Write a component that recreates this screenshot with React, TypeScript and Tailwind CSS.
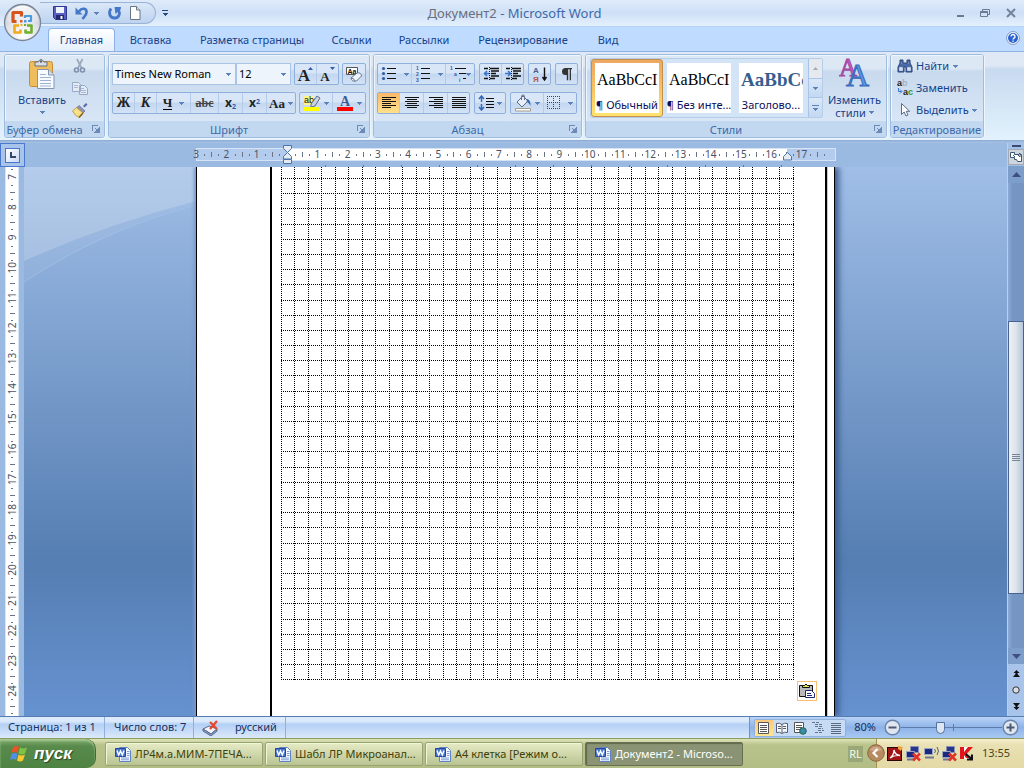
import type { ReactNode } from "react";
import { clsx } from "clsx";

const range = (from: number, to: number) =>
  Array.from({ length: to - from + 1 }, (_, i) => from + i);

function Arrow({ className }: { className?: string }) {
  return (
    <svg viewBox="0 0 5 3" className={clsx("h-[3px] w-[5px] shrink-0", className)} shapeRendering="crispEdges">
      <path d="M0 0h5v1h-1v1h-1v1h-1v-1h-1v-1h-1z" fill="#5a83bd" />
    </svg>
  );
}

/* ---------- Title bar ---------- */

function OfficeOrb() {
  return (
    <svg viewBox="0 0 40 40" className="size-10">
      <defs>
        <radialGradient id="orb" cx="50%" cy="85%" r="90%">
          <stop offset="0" stopColor="#ffffff" />
          <stop offset="0.5" stopColor="#dfe3ea" />
          <stop offset="1" stopColor="#a9b2c0" />
        </radialGradient>
        <linearGradient id="orbTop" x1="0" y1="0" x2="0" y2="1">
          <stop offset="0" stopColor="#fff" stopOpacity=".95" />
          <stop offset="1" stopColor="#fff" stopOpacity=".2" />
        </linearGradient>
      </defs>
      <circle cx="20.500" cy="20.500" r="18" fill="url(#orb)" stroke="#7c8596" strokeWidth="1.300" />
      <path d="M4.500 19.500a16 16 0 0 1 32 0q-16 4-32 0z" fill="url(#orbTop)" />
      <g fill="none" strokeLinejoin="round">
        <path d="M14.500 19.500h-3.500v-9h8.500v4" stroke="#d8521c" strokeWidth="3.200" />
        <path d="M26 19h3v-5h-6v2" stroke="#4a9be0" strokeWidth="2.200" />
        <path d="M17 23.500h-4.500v7h6v-3" stroke="#f2a91c" strokeWidth="2.600" />
        <path d="M25 23.500h4.500v7h-6v-3" stroke="#6fae2c" strokeWidth="2.600" />
      </g>
      <path d="M18 18h2.500v2.500h-2.500z" fill="#e2592a" />
      <path d="M22 18h2.500v2.500h-2.500z" fill="#4a9be0" />
      <path d="M18.500 22h2v2h-2z" fill="#f2b21c" />
      <path d="M22 22h2v2h-2z" fill="#6fae2c" />
    </svg>
  );
}

function SaveIcon() {
  return (
    <svg viewBox="0 0 16 16" className="size-4">
      <path d="M1.500 1.500h13v13h-11l-2-2z" fill="#5a5fc4" stroke="#2f3593" />
      <path d="M4 2h8v6h-8z" fill="#eef3fc" />
      <path d="M4 10h8v4.500h-8z" fill="#23286f" />
      <path d="M8.500 11h2v3h-2z" fill="#fff" />
    </svg>
  );
}

function UndoIcon() {
  return (
    <svg viewBox="0 0 16 16" className="size-4">
      <path d="M5 6.500C8 2 13 3.500 12.500 7.500c-.3 2.800-2 4-4 6.500" fill="none" stroke="#4577c9" strokeWidth="2.600" />
      <path d="M1.500 2.500v7h7z" fill="#4577c9" />
    </svg>
  );
}

function RedoIcon() {
  return (
    <svg viewBox="0 0 16 16" className="size-4">
      <path d="M4 3.500C1 8 3 13 7.500 13S13.500 8.500 11.500 5" fill="none" stroke="#4577c9" strokeWidth="2.800" />
      <path d="M7.500 2h6.500l-.500 2.500-5 4.500z" fill="#4577c9" />
    </svg>
  );
}

function PageIcon() {
  return (
    <svg viewBox="0 0 16 16" className="size-4">
      <path d="M3.500 1.500h6l3.500 3.500v9.500h-9.500z" fill="#fff" stroke="#6c7687" />
      <path d="M9.500 1.500v3.500h3.500" fill="#dbe2ec" stroke="#6c7687" />
    </svg>
  );
}

function TitleBar() {
  return (
    <header className="relative flex h-[27px] items-center border-b border-[#b7d3f5] bg-linear-to-b from-[#dfebfa] via-[#cfe0f6] to-[#e4f0fe]">
      <button aria-label="Office" className="absolute top-[2px] left-[2px] z-10">
        <OfficeOrb />
      </button>
      <div className="ml-10 flex h-[22px] w-[116px] items-center rounded-r-full border border-[#9ab4d8] border-l-0 bg-linear-to-b from-[#dbe8f8] to-[#bdd3ef] pl-3">
        <button aria-label="Сохранить"><SaveIcon /></button>
        <button aria-label="Отменить" className="ml-[6px] flex items-center gap-1"><UndoIcon /><Arrow /></button>
        <button aria-label="Повторить" className="ml-2"><RedoIcon /></button>
        <button aria-label="Создать" className="ml-1"><PageIcon /></button>
      </div>
      <button aria-label="Настройка панели" className="ml-[6px]">
        <svg viewBox="0 0 6 6" className="size-[6px]" shapeRendering="crispEdges">
          <path d="M0 0h6v1h-6zM0 3h6l-3 3z" fill="#27477f" />
        </svg>
      </button>
      <h1 className="flex-1 pt-[2px] pr-[93px] text-center text-[13px] text-[#3e6aaa]">
        <span className="text-[#696f7b]">Документ2</span> - Microsoft Word
      </h1>
      <div className="flex items-center gap-4 pr-2">
        <button aria-label="Свернуть">
          <svg viewBox="0 0 10 10" className="size-[10px]"><path d="M3 7h7v2h-7z" fill="#6a7a92" /></svg>
        </button>
        <button aria-label="Свернуть в окно">
          <svg viewBox="0 0 10 10" className="size-[10px]"><path d="M2.500 3.500v-2h7v5h-2M.5 3.500h7v5h-7zM.5 4.500h7" fill="none" stroke="#6a7a92" /></svg>
        </button>
        <button aria-label="Закрыть">
          <svg viewBox="0 0 10 10" className="size-[10px]"><path d="M1 1l8 8M9 1l-8 8" stroke="#74839a" strokeWidth="2" /></svg>
        </button>
      </div>
    </header>
  );
}

const tabs = [
  { name: "Вставка", width: "w-[71px]" },
  { name: "Разметка страницы", width: "w-[132px]" },
  { name: "Ссылки", width: "w-[67px]" },
  { name: "Рассылки", width: "w-[78px]" },
  { name: "Рецензирование", width: "w-[120px]" },
  { name: "Вид", width: "w-[50px]" },
];

function TabStrip() {
  return (
    <nav className="flex h-6 items-end bg-[#bfdbff] pl-12 text-[11px] text-[#15428b]">
      <button className="-mb-px h-6 w-[67px] rounded-t border border-b-0 border-[#8db2e3] bg-linear-to-b from-white to-[#e4eefb]">Главная</button>
      {tabs.map((tab) => (
        <button key={tab.name} className={clsx("h-6 pt-[2px] whitespace-nowrap", tab.width)}>{tab.name}</button>
      ))}
      <button aria-label="Справка" className="mr-1 mb-[6px] ml-auto">
        <svg viewBox="0 0 14 14" className="size-[14px]">
          <circle cx="7" cy="7" r="6.400" fill="#fff" stroke="#7c95bd" />
          <circle cx="7" cy="7" r="5" fill="#2a62d2" />
          <path d="M5 5.500a2 2 0 1 1 3 1.700c-.8.500-1 .7-1 1.300M7 9.500v1.300" fill="none" stroke="#fff" strokeWidth="1.400" />
        </svg>
      </button>
    </nav>
  );
}

/* ---------- Ribbon building blocks ---------- */

function Group({ title, width, launcher = true, children }: { title: string; width: string; launcher?: boolean; children: ReactNode }) {
  return (
    <section className={clsx("flex shrink-0 flex-col overflow-hidden rounded-[3px] border border-[#9fbbdd] shadow-[1px_1px_0_#eef5fd]", width)}>
      <div className="min-h-0 flex-1 bg-linear-to-b from-[#dde8f5] from-20% via-[#c9daee] via-25% to-[#d8e6f6] inset-shadow-[1px_1px_0_#eef5fd]">{children}</div>
      <footer className="relative flex h-[16px] items-center justify-center bg-[#c1d8f0] pt-px text-[11px] leading-[15px] whitespace-nowrap text-[#3e6aaa]">
        <span className={clsx(launcher && "pr-5")}>{title}</span>
        {launcher && (
          <button aria-label={`${title}: параметры`} className="absolute top-1 right-1">
            <svg viewBox="0 0 8 8" className="size-2" shapeRendering="crispEdges">
              <path d="M0 0h6v1h-5v5h-1z" fill="#6b8ab5" />
              <path d="M3 3l3 3M7 3v4h-4z" fill="#6b8ab5" stroke="#6b8ab5" />
            </svg>
          </button>
        )}
      </footer>
    </section>
  );
}

function ButtonBar({ children }: { children: ReactNode }) {
  return (
    <div className="flex h-[22px] shrink-0 divide-x divide-[#b3cae8] overflow-hidden rounded-[2px] border border-[#8fb0dc] bg-linear-to-b from-[#d8e6f7] from-45% via-[#c3d7f0] via-50% to-[#d3e2f6]">
      {children}
    </div>
  );
}

function Tool({ label, width, active, arrow, children }: { label: string; width: string; active?: boolean; arrow?: boolean; children: ReactNode }) {
  return (
    <button
      aria-label={label}
      className={clsx("flex h-full items-center justify-center gap-[3px] leading-none text-[#222]", width, active && "bg-linear-to-b from-[#fbb868] to-[#ffe08a]")}
    >
      {children}
      {arrow && <Arrow />}
    </button>
  );
}

function Lines({ rows }: { rows: [number, number][] }) {
  return (
    <svg viewBox="0 0 16 14" className="h-[14px] w-4" shapeRendering="crispEdges">
      {rows.map(([x, w], i) => <path key={i} d={`M${x} ${i * 2 + 1}h${w}v1h-${w}z`} fill="#111" />)}
    </svg>
  );
}

function PasteIcon() {
  return (
    <svg viewBox="0 0 30 32" className="h-8 w-[30px]">
      <rect x="2.500" y="3.500" width="23" height="25" rx="2" fill="#f0bd5d" stroke="#c68d36" />
      <path d="M8 4h3q3-5 6 0h3v4h-12z" fill="#d9dde4" stroke="#6b7280" />
      <circle cx="14" cy="3.500" r="1.200" fill="#5b6270" />
      <path d="M10.500 11.500h11l5.500 5.500v13.500h-16.500z" fill="#f7faff" stroke="#8496b4" />
      <path d="M21.500 11.500v5.500h5.500" fill="#cfdcee" stroke="#8496b4" />
      <path d="M13 16.500h6M13 19.500h11M13 22.500h11M13 25.500h11M13 28h11" stroke="#9fb2d2" />
    </svg>
  );
}

function ClipboardGroup() {
  return (
    <Group title="Буфер обмена" width="w-[101px]">
      <div className="flex pl-[11px]">
        <button className="flex w-[52px] flex-col items-center pt-[3px] text-[11px] leading-[14px] text-[#15428b]">
          <PasteIcon />
          <span className="mt-[3px]">Вставить</span>
          <Arrow className="mt-1" />
        </button>
        <div className="ml-1 flex flex-col gap-[6px] pt-[3px]">
          <button aria-label="Вырезать">
            <svg viewBox="0 0 16 16" className="size-4">
              <path d="M5 1l4.500 9M10.500 1l-4.500 9" stroke="#9aa9bf" strokeWidth="1.700" />
              <circle cx="4.500" cy="12" r="2" fill="none" stroke="#7f90ab" strokeWidth="1.600" />
              <circle cx="10.500" cy="12" r="2" fill="none" stroke="#7f90ab" strokeWidth="1.600" />
            </svg>
          </button>
          <button aria-label="Копировать">
            <svg viewBox="0 0 16 16" className="size-4">
              <path d="M.5 2.500h6l2 2v7h-8zM7.500 5.500h5l3 3v6h-8z" fill="#e3ebf6" stroke="#97a9c6" />
              <path d="M2 5.500h4M2 7.500h4M9 8.500h3M9 10.500h5M9 12.500h5" stroke="#a9b9d2" />
            </svg>
          </button>
          <button aria-label="Формат по образцу">
            <svg viewBox="0 0 16 16" className="size-4">
              <path d="M11 4l3-3 1.500 1.500-3 3z" fill="#5a6aa0" />
              <path d="M7 3.500l6 5.500-2 2-6.500-5z" fill="#8f95b0" stroke="#535d85" strokeWidth=".6" />
              <path d="M4.500 5.500l6.500 5.500-3.500 4.500q-4-1-7-6.500z" fill="#f8e08a" stroke="#b98f2c" strokeWidth=".8" />
              <path d="M7 15.500l4-4.500" stroke="#8a6417" strokeWidth="1.500" />
            </svg>
          </button>
        </div>
      </div>
    </Group>
  );
}

function Combo({ label, value, width }: { label: string; value: string; width: string }) {
  return (
    <div className={clsx("relative h-[22px] border border-[#a9c4e6] bg-[#edf4fc]", width)}>
      <select aria-label={label} className="block h-5 w-full appearance-none pb-px pl-[2px] text-[11px] leading-[18px] text-black">
        <option>{value}</option>
      </select>
      <Arrow className="pointer-events-none absolute top-[9px] right-[4px]" />
    </div>
  );
}

function FontGroup() {
  const serif = "font-['Liberation_Serif',serif]";
  return (
    <Group title="Шрифт" width="w-[262px]">
      <div className="flex flex-col gap-[7px] px-[3px] pt-[8px]">
        <div className="flex">
          <Combo label="Шрифт" value="Times New Roman" width="w-[124px]" />
          <Combo label="Размер" value="12" width="w-[55px]" />
          <div className="ml-[3px] flex gap-[3px]">
            <ButtonBar>
              <Tool label="Увеличить размер" width="w-[22px]">
                <span className={clsx(serif, "pt-[2px] text-[17px] font-bold")}>A</span>
                <svg viewBox="0 0 5 3" className="-ml-[5px] mb-3 h-[3px] w-[5px]"><path d="M0 3h5l-2.500-3z" fill="#2f5da8" /></svg>
              </Tool>
              <Tool label="Уменьшить размер" width="w-[21px]">
                <span className={clsx(serif, "pt-1 text-[13px] font-bold")}>A</span>
                <svg viewBox="0 0 5 3" className="-ml-[3px] mb-3 h-[3px] w-[5px]"><path d="M0 0h5l-2.500 3z" fill="#2f5da8" /></svg>
              </Tool>
            </ButtonBar>
            <ButtonBar>
              <Tool label="Очистить формат" width="w-[22px]">
                <svg viewBox="0 0 18 18" className="size-[18px]">
                  <path d="M1.500 2.500h11v7h-11z" fill="#fff" stroke="#555" />
                  <text x="2.500" y="8.500" fontSize="7" fontWeight="bold" fontFamily="Liberation Sans" fill="#111">Aa</text>
                  <path d="M6 13l6-5q4-1 4.500 3l-5 5q-5 1-5.500-3z" fill="#f0f3f8" stroke="#68768e" />
                  <path d="M6 13q3 0 4 3" fill="none" stroke="#68768e" />
                </svg>
              </Tool>
            </ButtonBar>
          </div>
        </div>
        <div className="flex gap-[3px]">
          <ButtonBar>
            <Tool label="Полужирный" width="w-[22px]"><b className={clsx(serif, "text-[14px]")}>Ж</b></Tool>
            <Tool label="Курсив" width="w-[22px]"><b className={clsx(serif, "text-[14px] italic")}>К</b></Tool>
            <Tool label="Подчеркнутый" width="w-[34px]" arrow>
              <b className={clsx(serif, "mr-1 border-b border-black text-[13px] leading-[12px]")}>Ч</b>
            </Tool>
            <Tool label="Зачеркнутый" width="w-[28px]"><b className={clsx(serif, "text-[12px] text-[#444] line-through")}>abc</b></Tool>
            <Tool label="Подстрочный" width="w-[24px]"><b className="text-[12px]">x<sub className="text-[7px] text-[#2f5da8]">2</sub></b></Tool>
            <Tool label="Надстрочный" width="w-[24px]"><b className="text-[12px]">x<sup className="text-[7px] text-[#2f5da8]">2</sup></b></Tool>
            <Tool label="Регистр" width="w-[28px]" arrow><b className={clsx(serif, "text-[13px]")}>Aa</b></Tool>
          </ButtonBar>
          <ButtonBar>
            <Tool label="Цвет выделения" width="w-[33px]" arrow>
              <svg viewBox="0 0 18 18" className="size-[18px]">
                <path d="M1 2h10v9h-10z" fill="#fbf58c" />
                <text x="1" y="9" fontSize="9" fontFamily="Liberation Sans" fill="#111">ab</text>
                <path d="M8 10l6-8 3 2-5 8-4 1z" fill="#c9d2e0" stroke="#5c6b86" />
                <path d="M1 13h16v4h-16z" fill="#ff0" />
              </svg>
            </Tool>
            <Tool label="Цвет текста" width="w-[32px]" arrow>
              <svg viewBox="0 0 18 18" className="size-[18px]">
                <text x="4" y="12" fontSize="14" fontWeight="bold" fontFamily="Liberation Serif" fill="#3b5c9a">A</text>
                <path d="M1 13h16v4h-16z" fill="#f00" />
              </svg>
            </Tool>
          </ButtonBar>
        </div>
      </div>
    </Group>
  );
}

function ParagraphGroup() {
  return (
    <Group title="Абзац" width="w-[209px]">
      <div className="flex flex-col gap-[7px] px-[3px] pt-[8px]">
        <div className="flex gap-1">
          <ButtonBar>
            <Tool label="Маркеры" width="w-[34px]" arrow>
              <svg viewBox="0 0 16 16" className="mr-1 size-4">
                <path d="M6 2.500h9M6 7.500h9M6 12.500h9" stroke="#111" />
                <circle cx="2.500" cy="2.500" r="1.600" fill="#2f5da8" /><circle cx="2.500" cy="7.500" r="1.600" fill="#2f5da8" /><circle cx="2.500" cy="12.500" r="1.600" fill="#2f5da8" />
              </svg>
            </Tool>
            <Tool label="Нумерация" width="w-[34px]" arrow>
              <svg viewBox="0 0 16 18" className="mr-1 h-[18px] w-4">
                <path d="M6 3.500h9M6 8.500h9M6 13.500h9" stroke="#111" />
                <g fontSize="5" fontWeight="bold" fontFamily="Liberation Sans" fill="#2f5da8"><text x="1" y="5">1</text><text x="1" y="11">2</text><text x="1" y="17">3</text></g>
              </svg>
            </Tool>
            <Tool label="Многоуровневый список" width="w-[28px]" arrow>
              <svg viewBox="0 0 17 18" className="-mr-1 h-[18px] w-[17px]">
                <path d="M5 3.500h11M9 8.500h7M13 13.500h3" stroke="#111" />
                <g fontSize="5" fontWeight="bold" fontFamily="Liberation Sans" fill="#2f5da8"><text x="0" y="5">1</text><text x="4" y="11">a</text><text x="9" y="17">i</text></g>
              </svg>
            </Tool>
          </ButtonBar>
          <ButtonBar>
            {["M6 7.500h-5M4 5l-2.500 2.500 2.500 2.500", "M0 7.500h5M3 5l2.500 2.500-2.500 2.500"].map((path, i) => (
              <Tool key={path} label={i ? "Увеличить отступ" : "Уменьшить отступ"} width={i ? "w-[21px]" : "w-[22px]"}>
                <svg viewBox="0 0 16 16" className="size-4">
                  <path d="M1 2.500h4M7 2.500h9M8 5h8M8 7.500h5M8 10h8M1 12.500h4M7 12.500h5" stroke="#111" strokeWidth="1.300" />
                  <path d="M6.500 1v14" stroke="#111" strokeDasharray="1 1" />
                  <path d={path} fill="none" stroke="#3b74d0" strokeWidth="1.600" />
                </svg>
              </Tool>
            ))}
          </ButtonBar>
          <ButtonBar>
            <Tool label="Сортировка" width="w-[21px]">
              <svg viewBox="0 0 16 20" className="h-5 w-4">
                <g fontSize="8" fontWeight="bold" fontFamily="Liberation Sans"><text x="1" y="9" fill="#3f6396">А</text><text x="1" y="18" fill="#b25a55">Я</text></g>
                <path d="M12.500 3.500v12M10.500 13l2 3 2-3" fill="none" stroke="#111" strokeWidth="1.400" />
              </svg>
            </Tool>
          </ButtonBar>
          <ButtonBar>
            <Tool label="Знаки абзаца" width="w-[21px]">
              <svg viewBox="0 0 12 14" className="h-[14px] w-3"><path d="M1 4.500a3.500 3.500 0 0 1 3.500-3.500h6.500v1.200h-1v11h-1.300v-11h-1.500v11h-1.400v-5.200h-1.300a3.500 3.500 0 0 1-3.500-3.500z" fill="#333" /></svg>
            </Tool>
          </ButtonBar>
        </div>
        <div className="flex gap-1">
          <ButtonBar>
            <Tool label="По левому краю" width="w-[22px]" active><Lines rows={[[1, 14], [1, 9], [1, 14], [1, 9], [1, 14], [1, 9]]} /></Tool>
            <Tool label="По центру" width="w-[24px]"><Lines rows={[[1, 14], [3, 10], [1, 14], [3, 10], [1, 14], [3, 10]]} /></Tool>
            <Tool label="По правому краю" width="w-[24px]"><Lines rows={[[1, 14], [6, 9], [1, 14], [6, 9], [1, 14], [6, 9]]} /></Tool>
            <Tool label="По ширине" width="w-[21px]"><Lines rows={[[1, 14], [1, 14], [1, 14], [1, 14], [1, 14], [1, 14]]} /></Tool>
          </ButtonBar>
          <ButtonBar>
            <Tool label="Интервал" width="w-[30px]" arrow>
              <svg viewBox="0 0 16 16" className="size-4">
                <path d="M3.500 2v5M3.500 9v5M1 4l2.500-3 2.500 3M1 12l2.500 3 2.500-3" fill="none" stroke="#3568b8" strokeWidth="1.500" />
                <path d="M8 3.500h8M8 6.500h8M8 9.500h8M8 12.500h8" stroke="#111" />
              </svg>
            </Tool>
          </ButtonBar>
          <ButtonBar>
            <Tool label="Заливка" width="w-[33px]" arrow>
              <svg viewBox="0 0 18 18" className="size-[18px]">
                <path d="M3 8l6-6 5 5-6 6z" fill="#e9eff8" stroke="#5c6b86" />
                <path d="M7.500 6v-3.500a1.500 1.500 0 0 1 3 0V6" fill="none" stroke="#5c6b86" />
                <path d="M13 5q4 1 3.500 7q-2-4-4-4z" fill="#3a67b3" />
                <path d="M1.500 14.500h15v2.500h-15z" fill="#fff" stroke="#a39c8e" />
              </svg>
            </Tool>
            <Tool label="Границы" width="w-[32px]" arrow>
              <svg viewBox="0 0 14 14" className="mr-1 size-[14px]" shapeRendering="crispEdges">
                <path d="M.5 0v13M6.500 0v13M12.500 0v13M0 .5h13M0 6.500h13M0 12.500h13" stroke="#444" strokeDasharray="1 1" />
              </svg>
            </Tool>
          </ButtonBar>
        </div>
      </div>
    </Group>
  );
}

const styles = [
  { sample: "AaBbCcI", name: "¶ Обычный" },
  { sample: "AaBbCcI", name: "¶ Без инте..." },
  { sample: "AaBbCc", name: "Заголово...", heading: true },
];

function StylesGroup() {
  return (
    <Group title="Стили" width="w-[302px]">
      <div className="flex pt-[3px] pl-1">
        <div className="flex h-[60px] w-[233px] justify-between rounded-[2px] border border-[#b5cde9] bg-[#d3e4f7]">
          <div className="flex">
            {styles.map((style, i) => (
              <button
                key={style.name}
                className={clsx("h-[58px] w-[72px]", i === 0 ? "rounded-[3px] border border-[#c2904a] bg-linear-to-b from-[#eda862] via-[#f8c162] to-[#ffe46e] p-[3px]" : "p-1")}
              >
                <span className="flex h-full flex-col items-center justify-between overflow-hidden bg-white pt-[7px] pb-px whitespace-nowrap">
                  <span className={clsx("w-full overflow-hidden pl-[2px] text-left font-['Liberation_Serif',serif] leading-5", style.heading ? "text-[19px] font-bold text-[#365f91]" : "text-[16px] text-black")}>{style.sample}</span>
                  <span className="text-[11px] leading-[15px] text-[#0d0d5c]">{style.name}</span>
                </span>
              </button>
            ))}
          </div>
          <div className="flex w-[14px] flex-col divide-y divide-[#a9c4e6] border-l border-[#a9c4e6]">
            <button aria-label="Вверх" className="flex flex-1 items-center justify-center bg-[#e6e9ee]">
              <svg viewBox="0 0 5 3" className="h-[3px] w-[5px]"><path d="M0 3h5l-2.500-3z" fill="#a5abb5" /></svg>
            </button>
            <button aria-label="Вниз" className="flex flex-1 items-center justify-center bg-linear-to-b from-[#dae8f8] to-[#c3d8f1]"><Arrow /></button>
            <button aria-label="Дополнительно" className="flex flex-1 flex-col items-center justify-center gap-[2px] bg-linear-to-b from-[#dae8f8] to-[#c3d8f1]">
              <span className="h-px w-[7px] bg-[#5a83bd]" /><Arrow />
            </button>
          </div>
        </div>
        <button className="flex flex-1 flex-col items-center text-[11px] leading-[13px] text-[#15428b]">
          <svg viewBox="0 0 32 32" className="h-8 w-8">
            <g fontFamily="Liberation Serif">
              <text x="0" y="18" fontSize="25" fill="#c558c0" stroke="#a04aa6" strokeWidth="1">A</text>
              <text x="7" y="28" fontSize="32" fill="#5f97e6" stroke="#3568bb" strokeWidth="1">A</text>
            </g>
          </svg>
          <span className="mt-[3px]">Изменить</span>
          <span className="flex items-center gap-[3px]">стили <Arrow /></span>
        </button>
      </div>
    </Group>
  );
}

function EditingGroup() {
  return (
    <Group title="Редактирование" width="w-[94px]" launcher={false}>
      <div className="flex flex-col items-start gap-[6px] pt-[3px] pl-[6px] text-[11px] leading-4 text-[#15428b]">
        <button className="flex items-center gap-[3px]">
          <svg viewBox="0 0 16 16" className="size-4">
            <path d="M3 2h3v3h4v-3h3v3l2 4v5h-6v-5h-2v5h-6v-5l2-4z" fill="#4a6aa5" stroke="#2b4679" />
            <path d="M2.500 9.500h3v3h-3zM10.500 9.500h3v3h-3zM4 5h1M11 5h1" fill="#d3e0f4" stroke="#dfe9f8" strokeWidth=".6" />
          </svg>
          Найти <Arrow className="ml-px" />
        </button>
        <button className="flex items-center gap-[3px]">
          <svg viewBox="0 0 16 16" className="size-4 overflow-visible">
            <g fontSize="9" fontWeight="bold" fontFamily="Liberation Sans"><text x="0" y="6" fill="#222">a</text><text x="5" y="6" fill="#a6b0bf">b</text><text x="6" y="15" fill="#222">a</text><text x="11" y="15" fill="#2c9b31">c</text></g>
            <path d="M1.500 8v3.500h3M3 9.500l2 2-2 2" fill="none" stroke="#3b74d0" />
          </svg>
          Заменить
        </button>
        <button className="flex items-center gap-[3px]">
          <svg viewBox="0 0 16 16" className="size-4"><path d="M4.500 1.500v11l2.700-2.500 1.800 4 2-1-1.800-3.700h3.500z" fill="#fff" stroke="#5b6c88" /></svg>
          Выделить <Arrow />
        </button>
      </div>
    </Group>
  );
}

/* ---------- Workspace ---------- */

const CM = 30.27;

function HorizontalRuler() {
  const at = (cm: number) => 92 + cm * CM;
  return (
    <svg viewBox="0 0 642 24" className="h-6 w-[642px] shrink-0 overflow-visible">
      <rect x="1.500" y="5.500" width="639" height="12" fill="#b3cbec" stroke="#d5e3f5" />
      <rect x="92" y="6" width="500" height="11" fill="#fff" />
      <g fontSize="10" fill="#4a5263" textAnchor="middle">
        {range(-3, 17).filter((n) => n !== 0).map((n) => <text key={n} x={at(n)} y="15">{Math.abs(n)}</text>)}
      </g>
      <g fill="#6b7485" shapeRendering="crispEdges">
        {range(-3, 17).map((n) => (
          <g key={n}>
            <rect x={Math.round(at(n + 0.27))} y="11" width="1" height="2" />
            <rect x={Math.round(at(n + 0.5))} y="9" width="1" height="5" />
            <rect x={Math.round(at(n + 0.73))} y="11" width="1" height="2" />
          </g>
        ))}
        {range(0, 12).map((n) => <rect key={n} x={130 + n * 38} y="22" width="1" height="2" />)}
      </g>
      <g fill="#e6ebf2" stroke="#4a74ad">
        <path d="M88.500 2.500h8v3l-4 4-4-4z" />
        <path d="M92.500 9.500l4 4v2.500h-8v-2.500z" />
        <path d="M88.500 16.500h8v4h-8z" />
        <path d="M592.500 9.500l4 4v3.500h-8v-3.500z" />
      </g>
    </svg>
  );
}

function VerticalRuler() {
  const at = (cm: number) => 10 + (cm - 7) * 30.24;
  return (
    <div className="w-6 shrink-0 overflow-hidden bg-[#9bbae2]">
      <svg viewBox="0 0 24 549" className="h-[549px] w-6">
        <path d="M5 0h14v549h-14z" fill="#d8e4f5" />
        <path d="M6 0h12v549h-12z" fill="#fff" />
        <g fontSize="10" fill="#4a5263" textAnchor="middle">
          {range(7, 24).map((n) => (
            <text key={n} transform={`translate(16 ${at(n)}) rotate(-90)`}>{n}</text>
          ))}
        </g>
        <g fill="#6b7485" shapeRendering="crispEdges">
          {range(6, 24).map((n) => (
            <g key={n}>
              <rect x="11" y={Math.round(at(n + 0.27))} width="2" height="1" />
              <rect x="10" y={Math.round(at(n + 0.5))} width="5" height="1" />
              <rect x="11" y={Math.round(at(n + 0.73))} width="2" height="1" />
            </g>
          ))}
        </g>
      </svg>
    </div>
  );
}

function SquaredPaper() {
  return (
    <svg viewBox="0 0 513 513" className="h-[513px] w-[513px]" shapeRendering="crispEdges">
      <g stroke="#000" strokeDasharray="1 1">
        {range(0, 38).map((i) => {
          const x = Math.round(i * 13.47) + 0.5;
          return <path key={i} d={`M${x} 0V513`} />;
        })}
        {range(0, 33).map((i) => {
          const y = Math.round(11 + i * 15.19) + 0.5;
          return <path key={i} d={`M0 ${y}H513`} />;
        })}
      </g>
    </svg>
  );
}

function DocumentPage() {
  return (
    <main className="relative flex w-[639px] shrink-0 border-x border-black bg-white shadow-[4px_0_6px_#3c5e91,-2px_0_3px_#7f9fcf]">
      <div className="mr-[7px] ml-[73px] flex flex-1 items-start border-r-2 border-l-2 border-black pl-[9px] shadow-[1px_0_0_#c9c9c9]">
        <SquaredPaper />
      </div>
      <button aria-label="Параметры вставки" className="absolute top-[514px] right-[17px] flex size-5 items-center justify-center border border-[#fbc06e] bg-white">
        <svg viewBox="0 0 16 16" className="size-4">
          <path d="M.5 2.500h13v11h-13z" fill="#b9b9b9" stroke="#111" />
          <path d="M3.500 4.500v-2h2q1.500-3 3 0h2v2z" fill="#e8e04c" stroke="#111" />
          <path d="M6.500 7.500h6l3 3v4h-9z" fill="#fff" stroke="#1b2a7a" />
          <path d="M8 10.500h4M8 12.500h5" stroke="#1b2a7a" />
        </svg>
      </button>
    </main>
  );
}

function ScrollColumn() {
  return (
    <div className="flex w-[17px] shrink-0 flex-col items-center border-l border-[#b8d0f0] bg-[#7d9dcb]">
      <div className="flex h-[23px] w-full flex-col items-center bg-[#a3c0e8] pt-[2px]">
        <div className="h-[2px] w-[9px] bg-[#3b4b73]" />
        <button aria-label="Линейка" className="mt-[2px] flex h-4 w-full items-center justify-center border border-[#a3a8b2] bg-[#cdd5df]">
          <svg viewBox="0 0 14 12" className="h-3 w-[14px]">
            <path d="M1.500 1.500h4v2h7v7h-4l-1-2h-2v-2h-4z" fill="#fff" stroke="#3d5671" />
            <path d="M4 4l2 2M9 4l2-2v4z" fill="#fff" stroke="#3d5671" />
          </svg>
        </button>
      </div>
      <button aria-label="Прокрутить вверх" className="flex h-[17px] w-full items-center justify-center">
        <svg viewBox="0 0 9 5" className="h-[5px] w-[9px]"><path d="M0 5h9l-4.500-5z" fill="#3e4f7c" /></svg>
      </button>
      <div className="flex w-full flex-1 flex-col bg-linear-to-r from-[#8cabd6] to-[#7595c2] to-30% pt-[138px] pb-[54px]">
        <div className="flex flex-1 flex-col items-center justify-center gap-px border border-[#4a628f] bg-linear-to-r from-[#eef1f6] via-[#dfe5ec] via-45% to-[#b6c7de]">
          {range(1, 4).map((n) => <div key={n} className="h-px w-2 bg-[#7a8497]" />)}
        </div>
      </div>
      <button aria-label="Прокрутить вниз" className="flex h-[16px] w-full items-center justify-center">
        <svg viewBox="0 0 9 5" className="h-[5px] w-[9px]"><path d="M0 0h9l-4.500 5z" fill="#3e4f7c" /></svg>
      </button>
      <div className="flex h-[52px] w-full flex-col items-center justify-between bg-[#a9c4ea] py-[6px]">
        <button aria-label="Предыдущая страница">
          <svg viewBox="0 0 7 8" className="h-2 w-[7px]"><path d="M3.500 0l3 3h-2v1l2.500 3h-7l2.500-3v-1h-2z" fill="#111" /></svg>
        </button>
        <button aria-label="Объект перехода">
          <svg viewBox="0 0 8 8" className="size-2"><circle cx="4" cy="4" r="3.200" fill="#d9dce2" stroke="#333" /></svg>
        </button>
        <button aria-label="Следующая страница">
          <svg viewBox="0 0 7 8" className="h-2 w-[7px]"><path d="M3.500 8l3-3h-2v-1l2.500-3h-7l2.500 3v1h-2z" fill="#111" /></svg>
        </button>
      </div>
    </div>
  );
}

function Workspace() {
  return (
    <div className="flex min-h-0 flex-1 bg-[#9bbae2]">
      <div className="flex min-w-0 flex-1 flex-col">
        <div className="flex h-6">
          <div className="flex w-[25px] shrink-0 items-center justify-center border border-[#4a78cc] bg-[#a9c4ea]">
            <button aria-label="Табуляция" className="flex size-[15px] items-center justify-center border border-[#4a78cc] bg-linear-to-br from-white to-[#c9daf2]">
              <svg viewBox="0 0 6 6" className="size-[6px]" shapeRendering="crispEdges"><path d="M0 0h2v4h4v2h-6z" fill="#31476b" /></svg>
            </button>
          </div>
          <div className="flex flex-1 justify-center"><HorizontalRuler /></div>
        </div>
        <div className="flex min-h-0 flex-1">
          <VerticalRuler />
          <div className="relative flex flex-1 justify-center overflow-hidden bg-linear-to-b from-[#a0bee7] via-[#557eb2] via-72% to-[#6692d0]">
            <svg viewBox="0 0 172 116" className="absolute top-0 left-0 h-[116px] w-[172px]">
              <path d="M0 0h172v37Q90 58 0 115z" fill="#fff" fillOpacity=".06" />
              <path d="M0 0h172v34Q80 58 0 94z" fill="#fff" fillOpacity=".18" />
              <path d="M0 115Q80 62 172 38" fill="none" stroke="#b5cef0" strokeOpacity=".4" />
            </svg>
            <DocumentPage />
          </div>
        </div>
      </div>
      <ScrollColumn />
    </div>
  );
}

/* ---------- Status bar ---------- */

function ViewIcon({ kind }: { kind: number }) {
  return (
    <svg viewBox="0 0 14 14" className="size-[14px]">
      {kind === 0 && <path d="M1.500 1.500h10v11h-10zM3 4.500h7M3 6.500h7M3 8.500h7M3 10.500h7" fill="#fff" stroke="#565656" />}
      {kind === 1 && <path d="M1.500 2.500q3-1 5.500 1q2.500-2 5.500-1v9q-3-1-5.500 1q-2.500-2-5.500-1zM7 3v9M3 5.500h3M3 7.500h3M8 5.500h3M8 7.500h3" fill="#f4f8fd" stroke="#565f70" />}
      {kind === 2 && (
        <>
          <path d="M1.500 1.500h9v10h-9zM3 4.500h6M3 6.500h6M3 8.500h6" fill="#fff" stroke="#565656" />
          <circle cx="10" cy="10" r="3.300" fill="#3a8ca8" stroke="#25614f" />
        </>
      )}
      {kind === 3 && <path d="M1 1.500h7M4 3.500h8M4 5.500h8M7 7.500h5M7 9.500h6M4 11.500h8" stroke="#66758d" strokeDasharray="3 1" />}
      {kind === 4 && <path d="M2 2.500h10M2 4.500h10M2 6.500h10M2 8.500h10M2 10.500h10M2 12.500h10" stroke="#5a6980" />}
    </svg>
  );
}

function ZoomButton({ label, plus }: { label: string; plus?: boolean }) {
  return (
    <button aria-label={label}>
      <svg viewBox="0 0 17 17" className="size-[17px]">
        <circle cx="8.500" cy="8.500" r="7.300" fill="#dfe6f0" stroke="#6882ab" strokeWidth="1.400" />
        <path d={plus ? "M4.500 8.500h8M8.500 4.500v8" : "M4.500 8.500h8"} stroke="#4a5874" strokeWidth="2" />
      </svg>
    </button>
  );
}

function StatusBar() {
  const cell = "flex h-full items-center border-r border-[#8fb0dd] whitespace-nowrap";
  return (
    <div className="flex h-[22px] items-center border-t border-[#567db1] bg-linear-to-b from-[#dceafc] from-20% via-[#b4d0f5] via-35% to-[#dbe9fb] text-[11px] text-[#15305f]">
      <div className={clsx(cell, "w-[105px] pl-2")}>Страница: 1 из 1</div>
      <div className={clsx(cell, "w-[89px] pl-[9px]")}>Число слов: 7</div>
      <div className={clsx(cell, "w-[92px] gap-[15px] pl-2")}>
        <svg viewBox="0 0 18 16" className="h-4 w-[18px]">
          <path d="M1 9l6-3 8 3-6 5z" fill="#f1f5fb" stroke="#57688a" />
          <path d="M1 9v2l8 5 6-5v-2l-6 5z" fill="#8ba5cf" stroke="#57688a" />
          <path d="M8 2l7 7M15 1l-7 8" stroke="#e6492f" strokeWidth="2.200" />
        </svg>
        русский
      </div>
      <div className="ml-auto flex h-full items-center border-l border-[#6f93c8] bg-linear-to-b from-[#b9d3f6] via-[#8db3e8] to-[#a9c9f3] pr-[5px] pl-1">
        <div className="flex h-[18px] overflow-hidden rounded-[2px] border border-[#93b0db] bg-[#c7dbf4]">
          {range(0, 4).map((kind) => (
            <button key={kind} aria-label={`Режим ${kind + 1}`} className={clsx("flex w-[18px] items-center justify-center", kind === 0 && "bg-linear-to-b from-[#fbc77c] to-[#ffe694]")}>
              <ViewIcon kind={kind} />
            </button>
          ))}
        </div>
        <span className="w-[38px] text-center">80%</span>
        <ZoomButton label="Уменьшить" />
        <div className="relative flex w-[101px] items-center">
          <div className="absolute right-0 left-0 h-px bg-[#5f7ba8]" />
          <div className="absolute left-[52px] h-[7px] w-px bg-[#5f7ba8]" />
          <input
            type="range"
            aria-label="Масштаб"
            min={0}
            max={100}
            defaultValue={38}
            className="relative h-4 w-full appearance-none bg-transparent [&::-webkit-slider-thumb]:h-3 [&::-webkit-slider-thumb]:w-[9px] [&::-webkit-slider-thumb]:appearance-none [&::-webkit-slider-thumb]:rounded-b-full [&::-webkit-slider-thumb]:border [&::-webkit-slider-thumb]:border-[#56719f] [&::-webkit-slider-thumb]:bg-[#dce6f3]"
          />
        </div>
        <ZoomButton label="Увеличить" plus />
      </div>
    </div>
  );
}

/* ---------- Taskbar ---------- */

function WordIcon() {
  return (
    <svg viewBox="0 0 16 16" className="size-4 shrink-0">
      <path d="M4.500 1.500h8l3 3v11h-11z" fill="#f5f9ff" stroke="#5f83c4" />
      <path d="M12 5.500h2.500M12 7.500h2.500M12 9.500h2.500M6 12h8M6 13.800h8" stroke="#7b9bd4" />
      <path d="M.5 2.500h10v8h-10z" fill="#4a76cc" stroke="#23489b" />
      <path d="M2 4.500l1.700 4.500 1.800-4 1.800 4 1.700-4.500" fill="none" stroke="#fff" strokeWidth="1.400" />
    </svg>
  );
}

const tasks = ["ЛР4м.а.МИМ-7ПЕЧА...", "Шабл ЛР Микроанал...", "А4 клетка [Режим о...", "Документ2 - Microso..."];

function NetworkIcon({ offline }: { offline?: boolean }) {
  return (
    <svg viewBox="0 0 17 17" className="size-[17px]">
      {offline && <path d="M5.500 1.500h8v6h-8z" fill="#26358f" stroke="#8791b5" />}
      <path d={offline ? "M1.500 6.500h8v6h-8z" : "M1.500 3.500h8v6h-8z"} fill="#1b2a80" stroke="#9aa4c4" />
      <path d={offline ? "M2 14.500h8" : "M2 12.500h9"} stroke="#6d7693" strokeWidth="2" />
      {offline ? (
        <path d="M8 8.500l7 7M15 8.500l-7 7" stroke="#e23228" strokeWidth="2.500" />
      ) : (
        <path d="M11.500 4q2 2 0 4M14 2q3 4 0 8" fill="none" stroke="#555f82" />
      )}
    </svg>
  );
}

function Taskbar() {
  return (
    <footer className="flex h-[30px] border-t border-[#8c9b60] bg-linear-to-b from-[#dfe5b9] via-[#b9c48c] via-20% to-[#b2bd85] text-[11px]">
      <button className="flex w-24 items-center gap-[5px] rounded-r-[10px] border-r border-[#47693a] bg-linear-to-b from-[#84ad73] via-[#588b4b] via-25% to-[#4e8343] pl-[10px] font-['Liberation_Sans',sans-serif] text-[17px] font-bold text-white italic inset-shadow-[0_2px_2px_#a5c792] text-shadow-[1px_1px_1px_#284820]">
        <svg viewBox="0 0 19 18" className="h-[18px] w-[19px] shrink-0">
          <path d="M3 2q4-2 6 0l-1.500 6q-3-2-6 0z" fill="#e85424" />
          <path d="M10 2.500q3 2 7 0l-2 6q-3 2-6.500 0z" fill="#7fc342" />
          <path d="M1.500 9q3-2 6 0l-1.500 6q-3-2-6 0z" fill="#4f8fe8" />
          <path d="M8.500 9.500q3 2 6.500 0l-2 6q-3 2-6 0z" fill="#f7c92e" />
        </svg>
        пуск
      </button>
      <div className="ml-[9px] flex gap-[2px] pt-[3px] pb-[2px]">
        {tasks.map((task, i) => (
          <button
            key={task}
            className={clsx(
              "flex w-[158px] items-center gap-[4px] overflow-hidden rounded-[2px] border pl-[9px] whitespace-nowrap",
              i === 3
                ? "border-[#697051] bg-[#8a9474] text-white inset-shadow-[1px_1px_1px_#5f6750]"
                : "border-[#98a471] bg-linear-to-b from-[#e6ebc6] via-[#d0d7aa] to-[#b9c493] text-[#3f3f08] inset-shadow-[1px_1px_0_#f2f6d8]",
            )}
          >
            <WordIcon />
            {task}
          </button>
        ))}
      </div>
      <div className="ml-auto flex items-center">
        <span className="bg-[#9aa877] px-px leading-4 text-[#f6f8e6]">RL</span>
        <div className="relative ml-[13px] flex h-full items-center gap-[1px] border-l border-[#a29450] bg-linear-to-b from-[#f5eecb] via-[#e9e1b3] via-20% to-[#e3d9a5] pr-[14px] pl-[10px] text-[#4b4620]">
          <button aria-label="Показать значки" className="absolute top-[5px] -left-[10px]">
            <svg viewBox="0 0 18 18" className="size-[18px]">
              <circle cx="9" cy="9" r="8.300" fill="#b78a60" stroke="#8a653f" />
              <path d="M3 6a7 7 0 0 1 12 0q-6 3-12 0z" fill="#cfa983" />
              <path d="M10.500 5l-4 4 4 4" fill="none" stroke="#fff" strokeWidth="2.200" />
            </svg>
          </button>
          <svg viewBox="0 0 17 16" className="h-4 w-[17px]">
            <path d="M0 1h15v14h-15z" fill="#2a0505" />
            <path d="M1 2h13v12h-13z" fill="#a01414" />
            <path d="M3 12q4-3 4-8 1 5 6 5.500-6-.500-10 2.500z" fill="none" stroke="#fff" strokeWidth="1.300" />
            <path d="M11 0l5 1-2 4-3-2z" fill="#f0a23b" />
          </svg>
          <NetworkIcon offline />
          <NetworkIcon />
          <NetworkIcon offline />
          <svg viewBox="0 0 16 16" className="size-4">
            <path d="M1 1h12l-5 6 5 6h-12z" fill="#fff" />
            <path d="M1 1h4v5l4-5h5l-6 6.500 2 4.500h-3l-2-3v4h-4z" fill="#e0161c" />
            <path d="M7 7l5 4v-2.500h2v6h-6v-2h2.500l-4-3.500z" fill="#111" />
          </svg>
          <time className="ml-[6px]">13:55</time>
        </div>
      </div>
    </footer>
  );
}

export default function App() {
  return (
    <div className="flex h-screen min-h-[768px] flex-col overflow-hidden bg-[#bfdbff] font-['Noto_Sans','Liberation_Sans',sans-serif]">
      <TitleBar />
      <TabStrip />
      <div className="flex h-[89px] gap-[3px] border-t border-[#8db2e3] bg-linear-to-b from-[#dfe9f5] from-15% via-[#c8daef] via-20% to-[#e2f2fd] px-1 pt-[2px] pb-[2px]">
        <ClipboardGroup />
        <FontGroup />
        <ParagraphGroup />
        <StylesGroup />
        <EditingGroup />
      </div>
      <div className="h-[3px] bg-linear-to-b from-[#8eabd2] to-[#a8c3e8]" />
      <Workspace />
      <StatusBar />
      <Taskbar />
    </div>
  );
}
